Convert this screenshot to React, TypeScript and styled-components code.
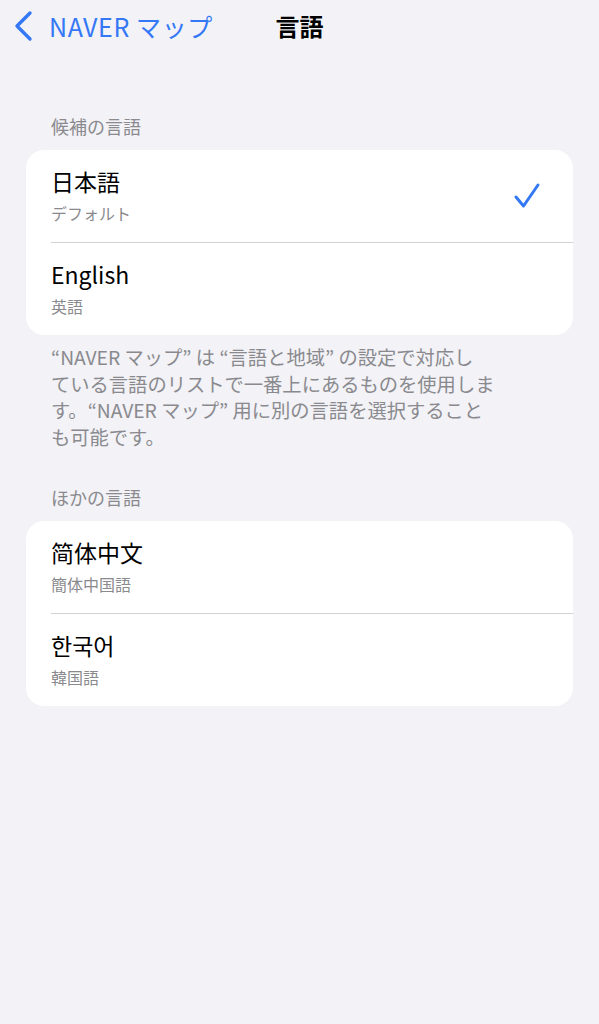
import React from 'react';
import styled, { createGlobalStyle } from 'styled-components';

const GlobalStyle = createGlobalStyle`
  html, body {
    margin: 0;
    padding: 0;
    background: #f2f2f7;
    font-family: "Noto Sans CJK JP", "Noto Sans", sans-serif;
    -webkit-font-smoothing: antialiased;
  }
`;

const BLUE = '#3478f6';
const GRAY = '#8a8a8e';

interface ILanguage {
  name: string;
  sub: string;
  checked?: boolean;
}

const suggested: ILanguage[] = [
  { name: '日本語', sub: 'デフォルト', checked: true },
  { name: 'English', sub: '英語' },
];

const others: ILanguage[] = [
  { name: '简体中文', sub: '簡体中国語' },
  { name: '한국어', sub: '韓国語' },
];

function App() {
  return (
    <Page>
      <GlobalStyle />
      <NavBar>
        <BackButton>
          <svg width="22" height="32" viewBox="0 0 22 32" fill="none">
            <polyline
              points="17,3 4,16 17,29"
              stroke={BLUE}
              strokeWidth="3.4"
              strokeLinecap="round"
              strokeLinejoin="round"
            />
          </svg>
          <BackLabel>NAVER マップ</BackLabel>
        </BackButton>
        <Title>言語</Title>
      </NavBar>

      <SectionHeader $first>候補の言語</SectionHeader>
      <Card>
        {suggested.map((lang) => (
          <LanguageRow key={lang.name} {...lang} />
        ))}
      </Card>
      <Footer>
        “NAVER マップ” は “言語と地域” の設定で対応し
        <br />
        ている言語のリストで一番上にあるものを使用しま
        <br />
        す。“NAVER マップ” 用に別の言語を選択すること
        <br />
        も可能です。
      </Footer>

      <SectionHeader>ほかの言語</SectionHeader>
      <Card>
        {others.map((lang) => (
          <LanguageRow key={lang.name} {...lang} />
        ))}
      </Card>
    </Page>
  );
}

function LanguageRow({ name, sub, checked }: ILanguage) {
  return (
    <Row>
      <RowText>
        <RowTitle>{name}</RowTitle>
        <RowSub>{sub}</RowSub>
      </RowText>
      {checked && (
        <svg width="28" height="28" viewBox="0 0 28 28" fill="none">
          <polyline
            points="3,15 10.5,24 25,3"
            stroke={BLUE}
            strokeWidth="3"
            strokeLinecap="round"
            strokeLinejoin="round"
          />
        </svg>
      )}
    </Row>
  );
}

export default App;

const Page = styled.div`
  width: 599px;
  min-height: 1024px;
  background: #f2f2f7;
`;

const NavBar = styled.header`
  position: relative;
  display: flex;
  align-items: center;
  height: 52px;
  padding-left: 13px;
`;

const BackButton = styled.div`
  display: flex;
  align-items: center;
  gap: 14px;
`;

const BackLabel = styled.span`
  color: ${BLUE};
  font-size: 25px;
  line-height: 30px;
  letter-spacing: 0.6px;
`;

const Title = styled.h1`
  position: absolute;
  left: 0;
  right: 0;
  margin: 0;
  text-align: center;
  font-size: 24px;
  font-weight: 700;
  line-height: 30px;
  color: #000;
  pointer-events: none;
`;

const SectionHeader = styled.div<{ $first?: boolean }>`
  margin-top: ${({ $first }) => ($first ? '63px' : '36px')};
  padding: 0 51px 13px;
  font-size: 18px;
  line-height: 22px;
  color: ${GRAY};
`;

const Card = styled.div`
  margin: 0 26px;
  background: #fff;
  border-radius: 18px;
  overflow: hidden;
`;

const Row = styled.div`
  display: flex;
  align-items: center;
  justify-content: space-between;
  height: 92px;
  margin-left: 25px;
  padding-right: 32px;
  box-sizing: border-box;

  & + & {
    border-top: 1px solid #d1d1d6;
    height: 93px;
  }
`;

const RowText = styled.div`
  display: flex;
  flex-direction: column;
  gap: 6px;
  margin-top: -2px;
`;

const RowTitle = styled.div`
  font-size: 23px;
  line-height: 30px;
  color: #000;
`;

const RowSub = styled.div`
  font-size: 16px;
  line-height: 22px;
  color: ${GRAY};
`;

const Footer = styled.p`
  margin: 9px 0 0;
  padding: 0 51px;
  font-size: 19.3px;
  line-height: 26.5px;
  color: ${GRAY};
  white-space: nowrap;
`;
